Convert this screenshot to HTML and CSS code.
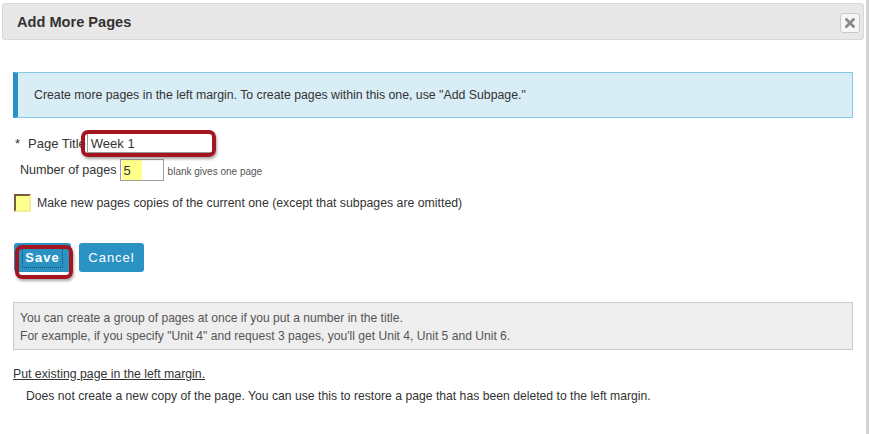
FILE: index.html
```html
<!DOCTYPE html>
<html>
<head>
<meta charset="utf-8">
<link rel="stylesheet" href="styles.css">
</head>
<body>
<div class="dialog">
  <div class="header">
    <span class="title">Add More Pages</span>
    <span class="close"><svg width="10" height="10" viewBox="0 0 10 10"><path d="M1.5 1.5 L8.5 8.5 M8.5 1.5 L1.5 8.5" stroke="#8a8a8a" stroke-width="2.8" stroke-linecap="square"/></svg></span>
  </div>
  <div class="content">
    <div class="info">Create more pages in the left margin. To create pages within this one, use "Add Subpage."</div>
    <div class="row row-title">
      <span class="star">*</span>
      <span class="label">Page Title</span>
      <span class="field-wrap">
        <span class="input input-title">Week 1</span>
        <span class="annot annot-title"></span>
      </span>
    </div>
    <div class="row row-num">
      <span class="label">Number of pages</span>
      <span class="input input-num"><span class="hl">5</span></span>
      <span class="hint">blank gives one page</span>
    </div>
    <div class="row row-check">
      <span class="checkbox"></span>
      <span class="label">Make new pages copies of the current one (except that subpages are omitted)</span>
    </div>
    <div class="buttons">
      <span class="btn-wrap">
        <span class="btn btn-save"><span class="focus">Save</span></span>
        <span class="annot annot-save"></span>
      </span>
      <span class="btn btn-cancel">Cancel</span>
    </div>
    <div class="note">
      <div>You can create a group of pages at once if you put a number in the title.</div>
      <div>For example, if you specify "Unit 4" and request 3 pages, you'll get Unit 4, Unit 5 and Unit 6.</div>
    </div>
    <a class="link">Put existing page in the left margin.</a>
    <div class="desc">Does not create a new copy of the page. You can use this to restore a page that has been deleted to the left margin.</div>
  </div>
</div>
</body>
</html>
```
FILE: styles.css
```css
html, body {
  margin: 0;
  padding: 0;
  background: #fff;
}
body {
  font-family: "Liberation Sans", Arial, sans-serif;
  color: #333;
  font-size: 13px;
}
.dialog {
  width: 869px;
  height: 434px;
  box-sizing: border-box;
  border-right: 3px solid #d2d2d2;
  padding-top: 3px;
}
.header {
  margin: 0 0 0 2px;
  width: 862px;
  height: 37px;
  box-sizing: border-box;
  background: #e8e8e8;
  border: 1px solid #d8d8d8;
  border-radius: 3px;
  display: flex;
  align-items: center;
  justify-content: space-between;
  padding: 0 3px 0 14px;
}
.title {
  font-weight: bold;
  font-size: 14.6px;
  color: #333;
}
.close {
  width: 20px;
  height: 20px;
  box-sizing: border-box;
  border: 1px solid #c8c8c8;
  border-radius: 3px;
  background: #f6f6f6;
  display: flex;
  align-items: center;
  justify-content: center;
  margin-top: 2px;
}
.content {
  padding: 0 0 0 13px;
  width: 853px;
  box-sizing: border-box;
}
.info {
  margin-top: 32px;
  height: 46px;
  box-sizing: border-box;
  background: #d9edf7;
  border: 1px solid #85c9e8;
  border-left: 5px solid #2b93c3;
  display: flex;
  align-items: center;
  padding-left: 16px;
  font-size: 12.3px;
  color: #333;
}
.row {
  display: flex;
  align-items: center;
}
.row-title {
  margin-top: 15px;
  height: 20px;
  padding-left: 2px;
}
.star {
  width: 13px;
  font-size: 13px;
}
.row-title .label {
  font-size: 13px;
}
.field-wrap {
  position: relative;
  display: inline-block;
  margin-left: 1px;
}
.input {
  display: inline-flex;
  align-items: center;
  box-sizing: border-box;
  border: 1px solid #999;
  background: #fff;
  font-size: 13px;
  color: #333;
}
.input-title {
  width: 126px;
  height: 20px;
  padding-left: 3px;
}
.annot {
  position: absolute;
  box-sizing: border-box;
  border: 4px solid #a3151f;
  border-radius: 7px;
  box-shadow: 1px 2px 3px rgba(0,0,0,0.35);
  pointer-events: none;
}
.annot-title {
  left: -6px;
  top: -3px;
  width: 135px;
  height: 27px;
}
.row-num {
  margin-top: 6px;
  height: 22px;
  padding-left: 7px;
}
.row-num .label {
  font-size: 12.6px;
  margin-right: 3px;
}
.input-num {
  width: 44px;
  height: 22px;
  padding-left: 1px;
  align-items: stretch;
  border-color: #a0a0a0;
}
.hl {
  background: #ffff8c;
  width: 20px;
  padding-left: 2px;
  display: flex;
  align-items: center;
  box-sizing: border-box;
  font-size: 13px;
}
.hint {
  font-size: 10px;
  color: #555;
  margin-left: 4px;
  margin-top: 2px;
}
.row-check {
  margin-top: 13px;
  height: 18px;
  padding-left: 1px;
}
.checkbox {
  width: 17px;
  height: 18px;
  box-sizing: border-box;
  background: #ffff8c;
  border-top: 2px solid #7a5a3c;
  border-left: 2px solid #7a5a3c;
  border-right: 2px solid #f4ee9a;
  border-bottom: 2px solid #f4ee9a;
  margin-right: 6px;
}
.row-check .label {
  font-size: 12.3px;
}
.buttons {
  margin-top: 31px;
  display: flex;
  gap: 8px;
  height: 30px;
  padding-left: 1px;
}
.btn-wrap {
  position: relative;
  display: inline-block;
}
.btn {
  display: flex;
  align-items: center;
  justify-content: center;
  height: 29px;
  box-sizing: border-box;
  background: #2b93c3;
  color: #fff;
  border-radius: 3px;
  font-size: 13px;
  letter-spacing: 1px;
}
.btn-save {
  width: 57px;
  font-weight: bold;
  padding-bottom: 1px;
}
.focus {
  outline: 1px dotted #1a4f6e;
  outline-offset: 2px;
}
.annot-save {
  left: 1px;
  top: 2px;
  width: 58px;
  height: 34px;
  border-radius: 7px;
}
.btn-cancel {
  width: 65px;
  font-weight: normal;
}
.note {
  margin-top: 29px;
  height: 48px;
  box-sizing: border-box;
  background: #eee;
  border: 1px solid #ccc;
  padding: 6px 0 0 6px;
  font-size: 12.1px;
  color: #555;
  line-height: 18px;
}
.link {
  display: inline-block;
  margin-top: 17px;
  font-size: 12.3px;
  color: #333;
  text-decoration: underline;
}
.desc {
  margin-top: 8px;
  padding-left: 13px;
  font-size: 12.2px;
  color: #333;
}
```
